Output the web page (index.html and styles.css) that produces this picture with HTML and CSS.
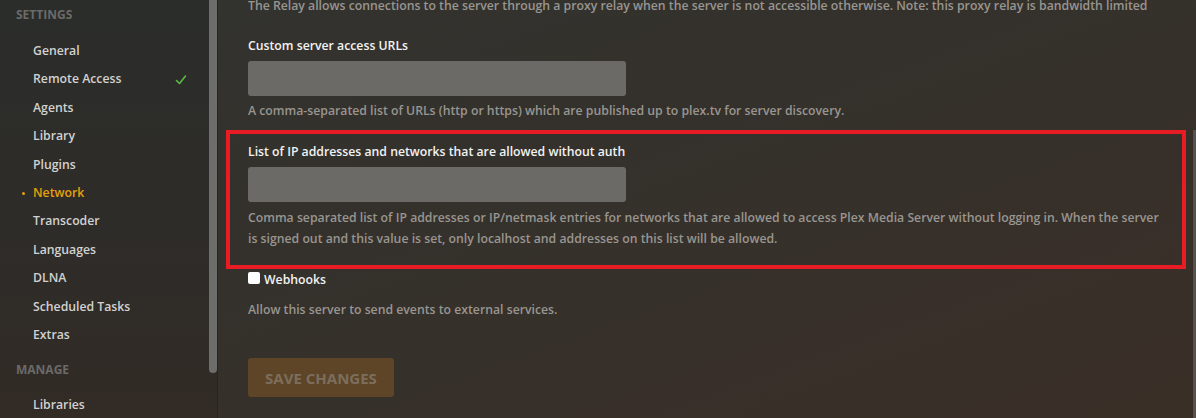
FILE: index.html
```html
<!DOCTYPE html>
<html>
<head>
<meta charset="utf-8">
<link rel="stylesheet" href="styles.css">
</head>
<body>
<div class="app">
  <aside class="sidebar">
    <nav class="nav">
      <div class="nav-head">SETTINGS</div>
      <ul class="nav-list">
        <li class="nav-item">General</li>
        <li class="nav-item">Remote Access
          <svg class="check" viewBox="0 0 12 12" width="12" height="12"><path d="M1.5 6.5 L4.5 9.5 L10.5 2" fill="none" stroke="#5db84a" stroke-width="1.6" stroke-linecap="round" stroke-linejoin="round"/></svg>
        </li>
        <li class="nav-item">Agents</li>
        <li class="nav-item">Library</li>
        <li class="nav-item">Plugins</li>
        <li class="nav-item active">Network</li>
        <li class="nav-item">Transcoder</li>
        <li class="nav-item">Languages</li>
        <li class="nav-item">DLNA</li>
        <li class="nav-item">Scheduled Tasks</li>
        <li class="nav-item">Extras</li>
      </ul>
      <div class="nav-head manage">MANAGE</div>
      <ul class="nav-list">
        <li class="nav-item">Libraries</li>
      </ul>
    </nav>
    <div class="scrollbar"><div class="thumb"></div></div>
  </aside>
  <main class="main">
    <p class="help relay">The Relay allows connections to the server through a proxy relay when the server is not accessible otherwise. Note: this proxy relay is bandwidth limited</p>
    <div class="field first">
      <label class="label">Custom server access URLs</label>
      <div class="input"></div>
      <p class="help">A comma-separated list of URLs (http or https) which are published up to plex.tv for server discovery.</p>
    </div>
    <div class="field highlight">
      <label class="label">List of IP addresses and networks that are allowed without auth</label>
      <div class="input"></div>
      <p class="help two">Comma separated list of IP addresses or IP/netmask entries for networks that are allowed to access Plex Media Server without logging in. When the server is signed out and this value is set, only localhost and addresses on this list will be allowed.</p>
    </div>
    <div class="field webhooks">
      <label class="check-label"><span class="box"></span>Webhooks</label>
      <p class="help">Allow this server to send events to external services.</p>
    </div>
    <div class="field actions">
      <button class="btn">SAVE CHANGES</button>
    </div>
  </main>
  <div class="edge"></div>
</div>
</body>
</html>
```
FILE: styles.css
```css
* { box-sizing: border-box; }
html, body { margin: 0; padding: 0; height: 100%; }
body {
  font-family: "Open Sans", "Liberation Sans", sans-serif;
  font-weight: 600;
  overflow: hidden;
  background: #2f2d2a;
}
.app {
  display: flex;
  width: 1196px;
  height: 418px;
  background: linear-gradient(160deg, #32332f 0%, #34312c 40%, #3a2f27 100%);
}
.sidebar {
  width: 218px;
  flex: none;
  display: flex;
  background: linear-gradient(180deg, #2b2d2a 0%, #2e2c29 55%, #322b26 100%);
  border-right: 1px solid #262522;
}
.nav { width: 209px; flex: none; }
.scrollbar { width: 8px; flex: none; }
.thumb {
  height: 373px;
  background: #6d6d6b;
  border-radius: 0 0 4px 4px;
}
.nav-head {
  padding-left: 16px;
  font-size: 12px;
  font-weight: 700;
  color: #6a6a69;
  line-height: 20px;
  margin-top: 5px;
  height: 32px;
}
.nav-head.manage { margin-top: 11px; height: 31px; }
.nav-list { list-style: none; margin: 0; padding: 0; }
.nav-item {
  position: relative;
  height: 28.4px;
  line-height: 28.4px;
  padding-left: 33px;
  font-size: 12.25px;
  color: #d2d2d0;
  display: flex;
  align-items: center;
}
.nav-item .check { margin-left: auto; margin-right: 22px; }
.nav-item.active { color: #e5a00d; }
.nav-item.active::before {
  content: "";
  position: absolute;
  left: 22px;
  top: 13px;
  width: 3px;
  height: 3px;
  border-radius: 50%;
  background: #e5a00d;
}
.main {
  flex: 1;
  padding-left: 8px;
  padding-right: 6px;
}
.edge {
  width: 3px;
  flex: none;
  margin-top: 130px;
  background: #56524d;
}
.help {
  margin: 0;
  font-size: 12.25px;
  line-height: 20px;
  color: #999590;
}
.relay { margin-top: -4px; padding-left: 22px; }
.field { padding-left: 22px; }
.field.first { margin-top: 19px; }
.label {
  display: block;
  font-size: 12.25px;
  line-height: 20px;
  color: #f2f2f2;
  padding-top: 1px;
  margin-bottom: -1px;
}
.input {
  width: 378px;
  height: 35px;
  margin-top: 6px;
  margin-bottom: 5px;
  background: #6c6a66;
  border-radius: 3px;
}
.field.highlight {
  margin-top: 9px;
  width: 960px;
  border: 4px solid #e81c25;
  padding: 7px 20px 16px 18px;
}
.help.two { line-height: 21px; }
.webhooks { margin-top: 1px; }
.check-label {
  display: flex;
  align-items: center;
  font-size: 12.25px;
  line-height: 20px;
  color: #f2f2f2;
  height: 20px;
}
.box {
  width: 12px;
  height: 12px;
  background: #fff;
  border-radius: 2px;
  margin-right: 4px;
  margin-top: -5px;
}
.webhooks .help { margin-top: 10px; }
.actions { margin-top: 38px; }
.btn {
  font-family: inherit;
  width: 146px;
  height: 39px;
  border: none;
  border-radius: 3px;
  background: #5e4527;
  color: #7c6e5c;
  font-size: 15px;
  font-weight: 700;
  padding: 0;
}
```
